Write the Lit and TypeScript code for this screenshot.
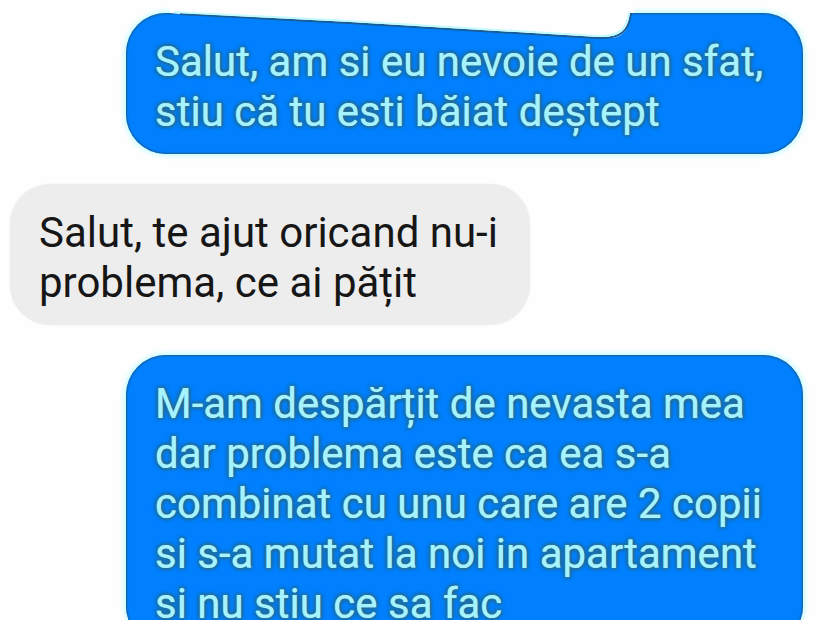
import { LitElement, html, css, svg, nothing } from "lit";
import { customElement, property } from "lit/decorators.js";

interface Message {
  from: "me" | "them";
  text: string;
  notched?: boolean;
}

const MESSAGES: Message[] = [
  {
    from: "me",
    text: "Salut, am si eu nevoie de un sfat,\nstiu că tu esti băiat deștept",
    notched: true,
  },
  { from: "them", text: "Salut, te ajut oricand nu-i\nproblema, ce ai pățit" },
  {
    from: "me",
    text: "M-am despărțit de nevasta mea\ndar problema este ca ea s-a\ncombinat cu unu care are 2 copii\nsi s-a mutat la noi in apartament\nsi nu stiu ce sa fac",
  },
];

@customElement("chat-bubble")
export class ChatBubble extends LitElement {
  @property({ reflect: true }) from: "me" | "them" = "me";
  @property({ type: Boolean }) notched = false;
  @property() text = "";

  static styles = css`
    :host {
      display: block;
      position: relative;
      box-sizing: border-box;
      padding: 24px 32px 17px 29px;
      border-radius: 40px;
    }
    :host([from="me"]) {
      margin-left: 116px;
      background: #0080fe;
      color: #a4f3ff;
      box-shadow: inset 0 0 2px 1px #1a5c94, 0 0 5px 2px #c2fbff;
    }
    :host([from="them"]) {
      align-self: flex-start;
      margin-right: 116px;
      background: #ededed;
      color: #161616;
      box-shadow: 0 0 2px #ededed;
    }
    .text {
      position: relative;
      margin: 0;
      white-space: pre-line;
    }
    :host([from="me"]) .text {
      text-shadow: 0 0 1px #7fd8f5, 0 0 4px #2a6478, 0 0 4px #2a6478,
        0 0 4px #2a6478;
    }
    .notch {
      position: absolute;
      top: -8px;
      left: 24px;
      width: 492px;
      height: 40px;
    }
    .cut {
      fill: #fefefe;
    }
    .edge {
      fill: none;
      stroke: #1a5c94;
      stroke-width: 2;
    }
    .glow {
      fill: none;
      stroke: #c2fbff;
      stroke-width: 2;
    }
  `;

  private notch() {
    return svg`<svg class="notch" viewBox="0 0 492 40" aria-hidden="true">
      <path class="cut" d="M20 0H484V8H481C479 23 474 33 460 33L448 33L200 18L30 9L20 8Z"/>
      <path class="edge" d="M30 9L200 18L448 33C472 34 479 25 481 8"/>
      <path class="glow" d="M24 7L200 16L448 31C470 32 477 23 479 7"/>
    </svg>`;
  }

  render() {
    return html`${this.notched ? this.notch() : nothing}
      <p class="text">${this.text}</p>`;
  }
}

@customElement("app-root")
export class AppRoot extends LitElement {
  static styles = css`
    :host {
      display: block;
      height: 100vh;
      overflow: hidden;
      background: #fefefe;
      font: 42px/50px Roboto, "Noto Sans", sans-serif;
    }
    .thread {
      display: flex;
      flex-direction: column;
      gap: 30px;
      padding: 13px 37px 13px 10px;
    }
  `;

  render() {
    return html`<main class="thread">
      ${MESSAGES.map(
        (m) => html`<chat-bubble
          from=${m.from}
          .text=${m.text}
          ?notched=${m.notched}
        ></chat-bubble>`
      )}
    </main>`;
  }
}
